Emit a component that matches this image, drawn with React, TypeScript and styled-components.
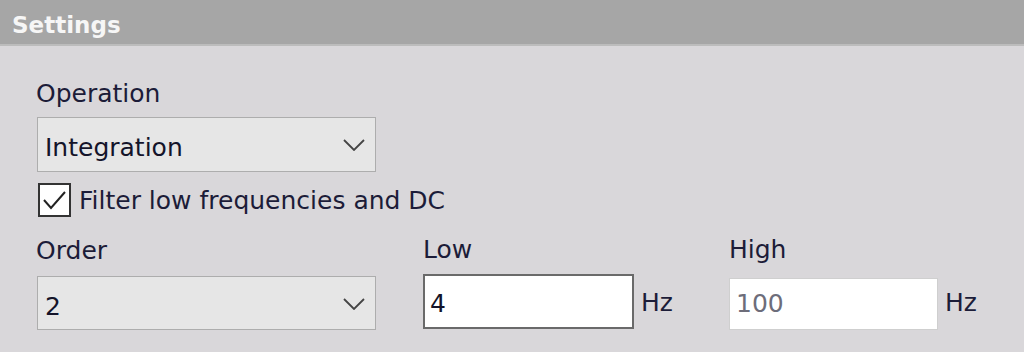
import React from "react";
import styled, { createGlobalStyle } from "styled-components";

const Global = createGlobalStyle`
  html, body { margin: 0; padding: 0; background: #d9d7da; }
  body { width: 1024px; height: 352px; overflow: hidden; font-family: "DejaVu Sans", "Liberation Sans", sans-serif; }
`;

const Panel = styled.div`
  width: 1024px;
  height: 352px;
  background: #d9d7da;
  display: flex;
  flex-direction: column;
`;

const Header = styled.div`
  height: 46px;
  background: #a6a6a6;
  border-bottom: 2px solid #bcbcbc;
  box-sizing: border-box;
  display: flex;
  align-items: center;
  padding-left: 12px;
  color: #f6f6f6;
  font-weight: bold;
  font-size: 23px;
  line-height: 28px;
  padding-top: 6px;
`;

const Body = styled.div`
  padding: 33px 0 0 36px;
  display: flex;
  flex-direction: column;
`;

const Label = styled.div<{ $mt?: number }>`
  font-size: 25px;
  line-height: 29px;
  color: #1c1c38;
  margin-top: ${(p) => p.$mt ?? 0}px;
  white-space: nowrap;
`;

const Select = styled.div<{ $mt: number; $h: number }>`
  box-sizing: border-box;
  width: 339px;
  height: ${(p) => p.$h}px;
  margin-top: ${(p) => p.$mt}px;
  margin-left: 1px;
  background: #e6e6e6;
  border: 1px solid #adadad;
  display: flex;
  align-items: flex-start;
  justify-content: space-between;
  padding: 15px 10px 0 7px;
  font-size: 25px;
  line-height: 29px;
  color: #14142a;
`;

const Chevron = styled.svg`
  width: 22px;
  height: 12px;
  margin-top: 6px;
`;

const CheckRow = styled.label`
  display: flex;
  align-items: flex-start;
  margin-top: 11px;
  margin-left: 2px;
  font-size: 25px;
  line-height: 29px;
  color: #1c1c38;
`;

const Box = styled.span`
  box-sizing: border-box;
  width: 33px;
  height: 34px;
  background: #ffffff;
  border: 2px solid #333333;
  display: flex;
  align-items: center;
  justify-content: center;
  margin-right: 8px;
  flex: none;
`;

const CheckText = styled.span`
  padding-top: 3px;
  white-space: nowrap;
`;

const Grid = styled.div`
  display: grid;
  grid-template-columns: 387px 306px auto;
  margin-top: 19px;
`;

const Column = styled.div`
  display: flex;
  flex-direction: column;
`;

const InputRow = styled.div<{ $mt: number }>`
  display: flex;
  align-items: flex-start;
  margin-top: ${(p) => p.$mt}px;
`;

const Input = styled.div<{ $focused?: boolean; $w: number; $h: number }>`
  box-sizing: border-box;
  width: ${(p) => p.$w}px;
  height: ${(p) => p.$h}px;
  background: #ffffff;
  border: ${(p) => (p.$focused ? "2px solid #6a6a6a" : "1px solid #cfcfcf")};
  padding: ${(p) => (p.$focused ? "13px 0 0 5px" : "10px 0 0 6px")};
  font-size: 25px;
  line-height: 29px;
  color: ${(p) => (p.$focused ? "#14142a" : "#6d6d7a")};
`;

const Unit = styled.span<{ $mt: number }>`
  font-size: 25px;
  line-height: 29px;
  color: #1c1c38;
  margin-left: 7px;
  margin-top: ${(p) => p.$mt}px;
`;

const ChevronIcon = () => (
  <Chevron viewBox="0 0 22 12">
    <polyline points="1,1 11,11 21,1" fill="none" stroke="#444" strokeWidth="1.8" />
  </Chevron>
);

export default function App() {
  return (
    <>
      <Global />
      <Panel>
        <Header>Settings</Header>
        <Body>
          <Label>Operation</Label>
          <Select $mt={9} $h={55}>
            <span>Integration</span>
            <ChevronIcon />
          </Select>
          <CheckRow>
            <Box>
              <svg width="27" height="22" viewBox="0 0 27 22">
                <polyline points="3,11 10,19 24,3" fill="none" stroke="#222" strokeWidth="2" />
              </svg>
            </Box>
            <CheckText>Filter low frequencies and DC</CheckText>
          </CheckRow>
          <Grid>
            <Column>
              <Label $mt={0}>Order</Label>
              <Select $mt={11} $h={54}>
                <span>2</span>
                <ChevronIcon />
              </Select>
            </Column>
            <Column>
              <Label $mt={-1}>Low</Label>
              <InputRow $mt={10}>
                <Input $focused $w={211} $h={55}>4</Input>
                <Unit $mt={14}>Hz</Unit>
              </InputRow>
            </Column>
            <Column>
              <Label $mt={-1}>High</Label>
              <InputRow $mt={14}>
                <Input $w={209} $h={52}>100</Input>
                <Unit $mt={10}>Hz</Unit>
              </InputRow>
            </Column>
          </Grid>
        </Body>
      </Panel>
    </>
  );
}
